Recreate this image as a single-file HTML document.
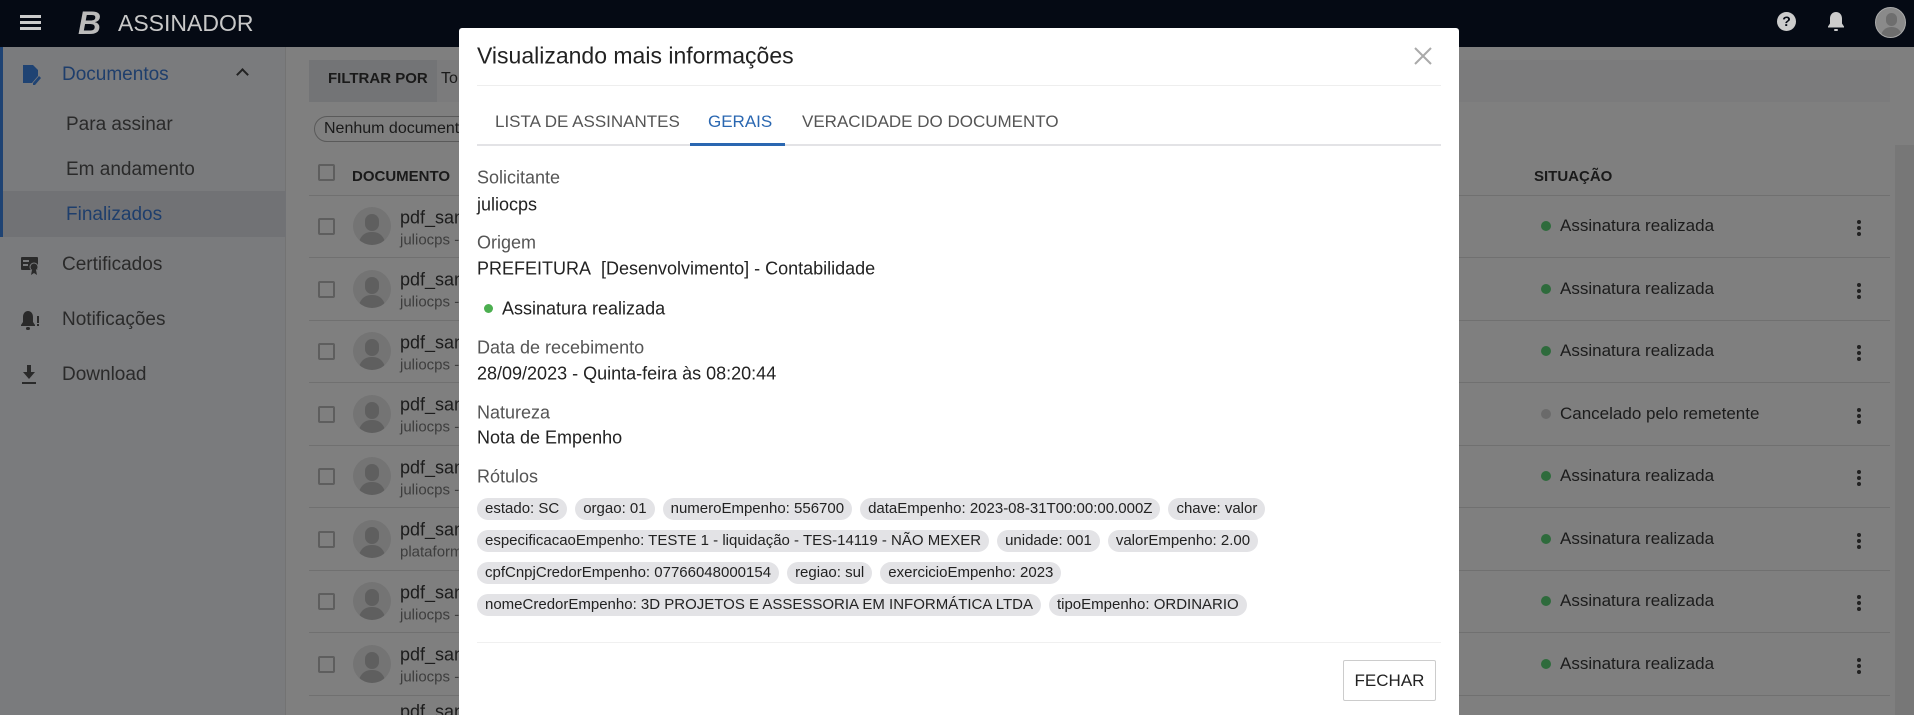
<!DOCTYPE html>
<html><head><meta charset="utf-8"><style>
*{box-sizing:border-box;margin:0;padding:0}
html,body{width:1914px;height:715px;overflow:hidden}
body{position:relative;background:#7f7f7f;font-family:"Liberation Sans",sans-serif;color:#1c1c1c}
#wrap{position:absolute;left:0;top:0;width:1914px;height:715px;overflow:hidden}
.a{position:absolute;white-space:nowrap}
.top{position:absolute;left:0;top:0;width:1914px;height:47px;background:#050a14}
.side{position:absolute;left:0;top:47px;width:286px;height:668px;background:#7a7b7d;border-right:1px solid #737373}
.si{position:absolute;font-size:19px;color:#2a2a2a;transform:translateY(-50%)}
.line{position:absolute;left:309px;width:1581px;height:1px;background:#707070}
.cb{position:absolute;left:318px;width:17px;height:17px;border:2px solid #5e5e5e;border-radius:2px}
.av{position:absolute;left:353px;width:38px;height:38px;border-radius:50%;background:#747474;overflow:hidden}
.av:before{content:"";position:absolute;left:12px;top:7px;width:14px;height:17px;border-radius:7px;background:#5f5f5f}
.av:after{content:"";position:absolute;left:6px;top:25px;width:26px;height:16px;border-radius:12px 12px 0 0;background:#5f5f5f}
.t1{position:absolute;left:400px;font-size:18px;color:#1c1c1c;transform:translateY(-50%)}
.t2{position:absolute;left:400px;font-size:15px;color:#3d3d3d;transform:translateY(-50%)}
.st{position:absolute;left:1560px;font-size:17px;color:#1c1c1c;transform:translateY(-50%)}
.dot{position:absolute;left:1541px;width:10px;height:10px;border-radius:50%;background:#2e6b3c}
.keb{position:absolute;left:1857px;width:4px;height:4px;border-radius:50%;background:#222;box-shadow:0 6px 0 #222,0 12px 0 #222}
.modal{position:absolute;left:459px;top:28px;width:1000px;height:700px;background:#fff;border-radius:3px}
.m{position:absolute;white-space:nowrap;transform:translateY(-50%)}
.lab{font-size:18px;color:#555}
.val{font-size:18px;color:#222}
.chips{position:absolute;left:18px;width:960px}
.row{display:flex;gap:8px;height:22px;margin-bottom:10px}
.chip{background:#e3e3e6;border-radius:11px;padding:0 8px;font-size:15px;line-height:22px;color:#222;white-space:nowrap}
</style></head><body><div id="wrap">
<div class="top">
  <div class="a" style="left:20px;top:15px;width:21px;height:3px;background:#ccc;box-shadow:0 6px 0 #ccc,0 12px 0 #ccc"></div>
  <div class="a" style="left:78px;top:6px;font-size:32px;font-weight:bold;font-style:italic;color:#bbb;line-height:34px">B</div>
  <div class="a" style="left:118px;top:9px;font-size:23px;color:#c8c8c8;line-height:28px">ASSINADOR</div>
  <div class="a" style="left:1777px;top:12px;width:19px;height:19px;border-radius:50%;background:#ccc;color:#050a14;font-size:14px;font-weight:bold;text-align:center;line-height:19px">?</div>
  <svg class="a" style="left:1826px;top:11px" width="20" height="22" viewBox="0 0 20 22"><path d="M10 1c-3.5 0-6 2.7-6 6.5v5L2 15.5v1h16v-1l-2-3v-5C16 3.7 13.5 1 10 1z" fill="#ccc"/><rect x="8" y="18" width="4" height="2" rx="1" fill="#ccc"/></svg>
  <div class="a" style="left:1875px;top:7px;width:31px;height:31px;border-radius:50%;background:#8a8a8a;border:1px solid #aaa;overflow:hidden"><div style="position:absolute;left:10px;top:5px;width:11px;height:13px;border-radius:6px;background:#6e6e6e"></div><div style="position:absolute;left:5px;top:19px;width:21px;height:14px;border-radius:10px 10px 0 0;background:#6e6e6e"></div></div>
</div>
<div class="side">
  <div class="a" style="left:0;top:0;width:3px;height:190px;background:#1f4373"></div>
  <div class="a" style="left:3px;top:144px;width:283px;height:46px;background:#717275"></div>
</div>
<svg class="a" style="left:21px;top:64px" width="20" height="23" viewBox="0 0 20 23"><path d="M2 1h10l5 5v6l-6 7H2z" fill="#1f4373"/><path d="M12 19l6-7 2 2-6 7h-2z" fill="#1f4373"/></svg>
<div class="si" style="left:62px;top:75px;color:#1e3e6c">Documentos</div>
<div class="a" style="left:238px;top:70px;width:9px;height:9px;border-left:2px solid #222;border-top:2px solid #222;transform:rotate(45deg)"></div>
<div class="si" style="left:66px;top:125px">Para assinar</div>
<div class="si" style="left:66px;top:170px">Em andamento</div>
<div class="si" style="left:66px;top:215px;color:#1e3e6c">Finalizados</div>
<svg class="a" style="left:20px;top:256px" width="20" height="20" viewBox="0 0 20 20"><rect x="1" y="1" width="17" height="13" rx="1" fill="#2a2a2a"/><rect x="3" y="4" width="6" height="2" fill="#7a7b7d"/><rect x="3" y="8" width="5" height="2" fill="#7a7b7d"/><circle cx="14" cy="11" r="4" fill="#2a2a2a" stroke="#7a7b7d"/><path d="M12 14l-1 5 3-2 3 2-1-5z" fill="#2a2a2a"/></svg>
<div class="si" style="left:62px;top:265px">Certificados</div>
<svg class="a" style="left:20px;top:310px" width="20" height="22" viewBox="0 0 20 22"><path d="M8 1c-3 0-5 2.5-5 6v5l-2 3v1h14v-1l-2-3V7c0-3.5-2-6-5-6z" fill="#2a2a2a"/><rect x="6" y="17" width="4" height="3" rx="1.5" fill="#2a2a2a"/><rect x="17" y="6" width="2" height="7" fill="#2a2a2a"/><rect x="17" y="14" width="2" height="2" fill="#2a2a2a"/></svg>
<div class="si" style="left:62px;top:320px">Notificações</div>
<svg class="a" style="left:21px;top:365px" width="16" height="20" viewBox="0 0 16 20"><path d="M6 0h4v7h4l-6 7-6-7h4z" fill="#2a2a2a"/><rect x="1" y="17" width="14" height="2" fill="#2a2a2a"/></svg>
<div class="si" style="left:62px;top:375px">Download</div>

<div class="a" style="left:309px;top:60px;width:1581px;height:42px;background:#737476"></div>
<div class="a" style="left:437px;top:60px;width:1453px;height:42px;background:#7b7b7c"></div>
<div class="a" style="left:328px;top:70px;font-size:15px;font-weight:bold;color:#1a1a1a">FILTRAR POR</div>
<div class="a" style="left:441px;top:70px;font-size:16px;color:#1a1a1a">To</div>
<div class="a" style="left:314px;top:116px;width:200px;height:26px;border:1px solid #5a5a5a;border-radius:13px;font-size:16px;line-height:24px;padding-left:9px;color:#1a1a1a">Nenhum documento</div>
<div class="cb" style="top:164px"></div>
<div class="a" style="left:352px;top:168px;font-size:15px;font-weight:bold;color:#1a1a1a">DOCUMENTO</div>
<div class="a" style="left:1534px;top:168px;font-size:15px;font-weight:bold;color:#1a1a1a">SITUAÇÃO</div>
<div class="a" style="left:1895px;top:145px;width:19px;height:570px;background:#777"></div>

<div class="line" style="top:195px"></div>
<div class="cb" style="top:218px"></div><div class="av" style="top:207px"></div><div class="t1" style="top:218px">pdf_sam</div><div class="t2" style="top:240px">juliocps - l</div><div class="dot" style="top:221px"></div><div class="st" style="top:226px">Assinatura realizada</div><div class="keb" style="top:220px"></div>
<div class="line" style="top:257px"></div>
<div class="cb" style="top:281px"></div><div class="av" style="top:270px"></div><div class="t1" style="top:280px">pdf_sam</div><div class="t2" style="top:302px">juliocps - l</div><div class="dot" style="top:284px"></div><div class="st" style="top:289px">Assinatura realizada</div><div class="keb" style="top:283px"></div>
<div class="line" style="top:320px"></div>
<div class="cb" style="top:343px"></div><div class="av" style="top:332px"></div><div class="t1" style="top:343px">pdf_sam</div><div class="t2" style="top:365px">juliocps - l</div><div class="dot" style="top:346px"></div><div class="st" style="top:351px">Assinatura realizada</div><div class="keb" style="top:345px"></div>
<div class="line" style="top:382px"></div>
<div class="cb" style="top:406px"></div><div class="av" style="top:395px"></div><div class="t1" style="top:405px">pdf_sam</div><div class="t2" style="top:427px">juliocps - l</div><div class="dot" style="top:409px;background:#6a6a6a"></div><div class="st" style="top:414px">Cancelado pelo remetente</div><div class="keb" style="top:408px"></div>
<div class="line" style="top:445px"></div>
<div class="cb" style="top:468px"></div><div class="av" style="top:457px"></div><div class="t1" style="top:468px">pdf_sam</div><div class="t2" style="top:490px">juliocps - l</div><div class="dot" style="top:471px"></div><div class="st" style="top:476px">Assinatura realizada</div><div class="keb" style="top:470px"></div>
<div class="line" style="top:507px"></div>
<div class="cb" style="top:531px"></div><div class="av" style="top:520px"></div><div class="t1" style="top:530px">pdf_sam</div><div class="t2" style="top:552px">plataform</div><div class="dot" style="top:534px"></div><div class="st" style="top:539px">Assinatura realizada</div><div class="keb" style="top:533px"></div>
<div class="line" style="top:570px"></div>
<div class="cb" style="top:593px"></div><div class="av" style="top:582px"></div><div class="t1" style="top:593px">pdf_sam</div><div class="t2" style="top:615px">juliocps - l</div><div class="dot" style="top:596px"></div><div class="st" style="top:601px">Assinatura realizada</div><div class="keb" style="top:595px"></div>
<div class="line" style="top:632px"></div>
<div class="cb" style="top:656px"></div><div class="av" style="top:645px"></div><div class="t1" style="top:655px">pdf_sam</div><div class="t2" style="top:677px">juliocps - l</div><div class="dot" style="top:659px"></div><div class="st" style="top:664px">Assinatura realizada</div><div class="keb" style="top:658px"></div>
<div class="line" style="top:695px"></div>
<div class="t1" style="top:712px">pdf_sam</div>

<div class="modal">
  <div class="m" style="left:18px;top:28px;font-size:23px;color:#222">Visualizando mais informações</div>
  <svg class="a" style="left:955px;top:19px" width="18" height="18" viewBox="0 0 18 18"><path d="M1 1L17 17M17 1L1 17" stroke="#aaa" stroke-width="2"/></svg>
  <div class="a" style="left:18px;top:57px;width:964px;height:1px;background:#eee"></div>
  <div class="m" style="left:36px;top:94px;font-size:17px;color:#555">LISTA DE ASSINANTES</div>
  <div class="m" style="left:249px;top:94px;font-size:17px;color:#2a67b1">GERAIS</div>
  <div class="m" style="left:343px;top:94px;font-size:17px;color:#555">VERACIDADE DO DOCUMENTO</div>
  <div class="a" style="left:18px;top:116px;width:964px;height:2px;background:#e3e3e6"></div>
  <div class="a" style="left:231px;top:115px;width:95px;height:3px;background:#2a67b1"></div>
  <div class="m lab" style="left:18px;top:150px">Solicitante</div>
  <div class="m val" style="left:18px;top:177px">juliocps</div>
  <div class="m lab" style="left:18px;top:215px">Origem</div>
  <div class="m val" style="left:18px;top:241px">PREFEITURA&nbsp; [Desenvolvimento] - Contabilidade</div>
  <div class="a" style="left:25px;top:276px;width:9px;height:9px;border-radius:50%;background:#4caf50"></div>
  <div class="m val" style="left:43px;top:281px">Assinatura realizada</div>
  <div class="m lab" style="left:18px;top:320px">Data de recebimento</div>
  <div class="m val" style="left:18px;top:346px">28/09/2023 - Quinta-feira às 08:20:44</div>
  <div class="m lab" style="left:18px;top:385px">Natureza</div>
  <div class="m val" style="left:18px;top:410px">Nota de Empenho</div>
  <div class="m lab" style="left:18px;top:449px">Rótulos</div>
  <div class="chips" style="top:470px">
    <div class="row"><span class="chip">estado: SC</span><span class="chip">orgao: 01</span><span class="chip">numeroEmpenho: 556700</span><span class="chip">dataEmpenho: 2023-08-31T00:00:00.000Z</span><span class="chip">chave: valor</span></div>
    <div class="row"><span class="chip">especificacaoEmpenho: TESTE 1 - liquidação - TES-14119 - NÃO MEXER</span><span class="chip">unidade: 001</span><span class="chip">valorEmpenho: 2.00</span></div>
    <div class="row"><span class="chip">cpfCnpjCredorEmpenho: 07766048000154</span><span class="chip">regiao: sul</span><span class="chip">exercicioEmpenho: 2023</span></div>
    <div class="row"><span class="chip">nomeCredorEmpenho: 3D PROJETOS E ASSESSORIA EM INFORMÁTICA LTDA</span><span class="chip">tipoEmpenho: ORDINARIO</span></div>
  </div>
  <div class="a" style="left:18px;top:614px;width:964px;height:1px;background:#f0f0f0"></div>
  <div class="a" style="left:884px;top:632px;width:93px;height:41px;border:1px solid #ccc;border-radius:2px;font-size:17px;line-height:39px;text-align:center;color:#222">FECHAR</div>
</div>
</div></body></html>
